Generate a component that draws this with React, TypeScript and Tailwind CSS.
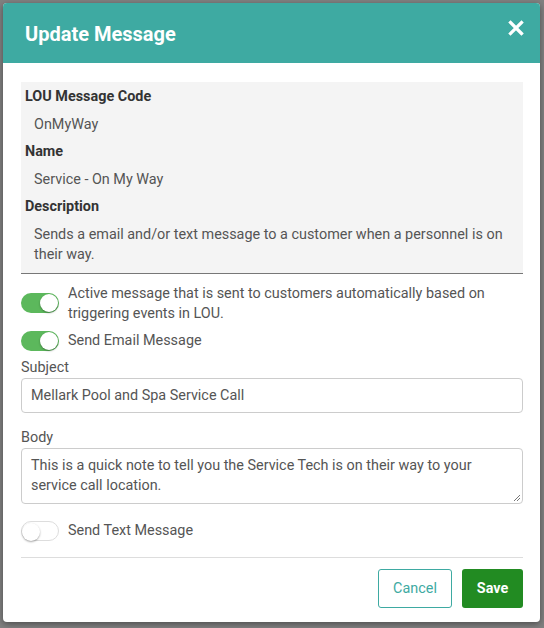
import React from "react";

function Toggle({ on }: { on: boolean }) {
  return (
    <div
      className={`relative w-[38px] h-[20px] rounded-full shrink-0 ${
        on ? "bg-[#5cb85c]" : "bg-white border border-[#ddd]"
      }`}
    >
      <div
        className={`absolute top-[1px] w-[18px] h-[18px] rounded-full bg-white shadow-[0_1px_2px_rgba(0,0,0,0.35)] ${
          on ? "right-[1px]" : "left-0 top-0"
        }`}
      />
    </div>
  );
}

export default function App() {
  return (
    <div
      className="w-[544px] h-[628px] bg-[#808080] pt-[3px] pl-[3px] overflow-hidden"
      style={{ fontFamily: "Roboto, 'Liberation Sans', sans-serif" }}
    >
      <div className="w-[537px] h-[619px] bg-white rounded-[4px] overflow-hidden shadow-[0_2px_6px_rgba(0,0,0,0.4)] flex flex-col">
        <div className="h-[60px] bg-[#3eaaa2] flex items-center justify-between pl-[22px] pr-[16px]">
          <h2 className="text-white text-[20px] font-bold pt-[1px]">Update Message</h2>
          <svg width="16" height="16" viewBox="0 0 16 16" className="-mt-[10px]">
            <path d="M2.5 2.5 L13.5 13.5 M13.5 2.5 L2.5 13.5" stroke="white" strokeWidth="3.2" strokeLinecap="square" />
          </svg>
        </div>

        <div className="pl-[18px] pr-[17px] pt-[19px] text-[14.4px] text-[#555]">
          <div className="bg-[#f4f4f4] border-b border-[#777] px-[4px] pt-[5px] pb-[8px]">
            <p className="font-bold text-[#333] leading-[20px]">LOU Message Code</p>
            <p className="pl-[9px] mt-[8px] leading-[20px]">OnMyWay</p>
            <p className="font-bold text-[#333] mt-[7px] leading-[20px]">Name</p>
            <p className="pl-[9px] mt-[8px] leading-[20px]">Service - On My Way</p>
            <p className="font-bold text-[#333] mt-[7px] leading-[20px]">Description</p>
            <p className="pl-[9px] pr-[12px] mt-[8px] leading-[20px]">
              Sends a email and/or text message to a customer when a personnel is on their way.
            </p>
          </div>

          <div className="flex gap-[9px] mt-[10px]">
            <div className="pt-[9px]">
              <Toggle on />
            </div>
            <p className="leading-[20px]">
              Active message that is sent to customers automatically based on triggering events in LOU.
            </p>
          </div>
          <div className="flex items-center gap-[9px] mt-[7px]">
            <Toggle on />
            <p className="leading-[20px]">Send Email Message</p>
          </div>

          <p className="mt-[7px] leading-[20px]">Subject</p>
          <div className="h-[35px] border border-[#ccc] rounded-[4px] flex items-center px-[9px]">
            Mellark Pool and Spa Service Call
          </div>

          <p className="mt-[15px] leading-[20px]">Body</p>
          <div className="relative h-[56px] border border-[#ccc] rounded-[4px] px-[9px] pt-[7px] leading-[20px]">
            This is a quick note to tell you the Service Tech is on their way to your service call location.
            <svg width="8" height="8" viewBox="0 0 8 8" className="absolute right-[1px] bottom-[1px]">
              <path d="M7 1 L1 7 M7 4 L4 7" stroke="#777" strokeWidth="1" />
            </svg>
          </div>

          <div className="flex items-center gap-[9px] mt-[17px]">
            <Toggle on={false} />
            <p className="leading-[20px]">Send Text Message</p>
          </div>

          <div className="mt-[16px] border-t border-[#ddd]" />

          <div className="flex justify-end gap-[10px] mt-[11px]">
            <button className="w-[74px] h-[39px] border border-[#3eaaa2] rounded-[3px] text-[#3eaaa2] text-[14.4px]">
              Cancel
            </button>
            <button className="w-[61px] h-[39px] bg-[#228b22] rounded-[3px] text-white text-[14.4px] font-bold">
              Save
            </button>
          </div>
        </div>
      </div>
    </div>
  );
}
